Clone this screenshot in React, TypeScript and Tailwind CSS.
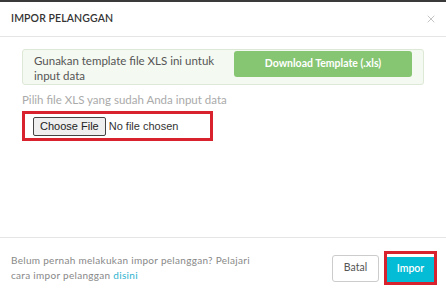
import { X } from "lucide-react";

export default function App() {
  return (
    <div
      className="flex h-[298px] w-[446px] flex-col bg-white border-t-[2px] border-[#3a3a3a] text-[#555]"
      style={{ fontFamily: "Lato, 'Open Sans', sans-serif" }}
    >
      {/* header */}
      <div className="flex h-[35px] items-center justify-between border-b border-[#e5e5e5] pl-[11px] pr-[9px]">
        <span className="text-[10.5px] font-semibold tracking-[0.1px] text-[#333]">IMPOR PELANGGAN</span>
        <X className="h-[12px] w-[12px] text-[#c4c4c4]" strokeWidth={2} />
      </div>

      {/* body */}
      <div className="flex-1 px-[22px] pt-[12px]">
        <div className="flex items-start justify-between rounded-[3px] border border-[#dde8d6] bg-[#f4f9f1] py-[1px] pl-[11px] pr-[11px]">
          <p className="w-[190px] pt-[2px] text-[11.5px] leading-[15px] text-[#555]">
            Gunakan template file XLS ini untuk input data
          </p>
          <button className="h-[26px] w-[178px] rounded-[3px] bg-[#86c572] text-[10.5px] font-bold text-white">
            Download Template (.xls)
          </button>
        </div>

        <p className="mt-[7px] text-[11.5px] leading-[15px] text-[#aaa]">
          Pilih file XLS yang sudah Anda input data
        </p>

        <div className="mt-[4px] flex h-[30px] w-[191px] items-center border-[3px] border-[#d8222d] pl-[8px]">
          <span className="flex h-[19px] items-center rounded-[2px] border border-[#444] bg-[#efefef] px-[6px] text-[11px] text-[#222]" style={{ fontFamily: "'Liberation Sans', Arial, sans-serif" }}>
            Choose File
          </span>
          <span className="ml-[3px] text-[11px] text-[#333]" style={{ fontFamily: "'Liberation Sans', Arial, sans-serif" }}>
            No file chosen
          </span>
        </div>
      </div>

      {/* footer */}
      <div className="flex h-[61px] items-center justify-between border-t border-[#e5e5e5] pl-[11px] pr-[9px]">
        <p className="w-[250px] text-[10px] leading-[15px] tracking-[0.3px] text-[#888]">
          Belum pernah melakukan impor pelanggan? Pelajari cara impor pelanggan{" "}
          <span className="text-[#2bb3d0]">disini</span>
        </p>
        <div className="flex items-center gap-[5px]">
          <button className="h-[27px] w-[47px] rounded-[3px] border border-[#ccc] bg-white text-[10.5px] text-[#555]">
            Batal
          </button>
          <div className="border-[3px] border-[#d8222d] p-0">
            <button className="h-[25px] w-[47px] bg-[#04bcd6] text-[10.5px] font-semibold text-white">
              Impor
            </button>
          </div>
        </div>
      </div>
    </div>
  );
}
